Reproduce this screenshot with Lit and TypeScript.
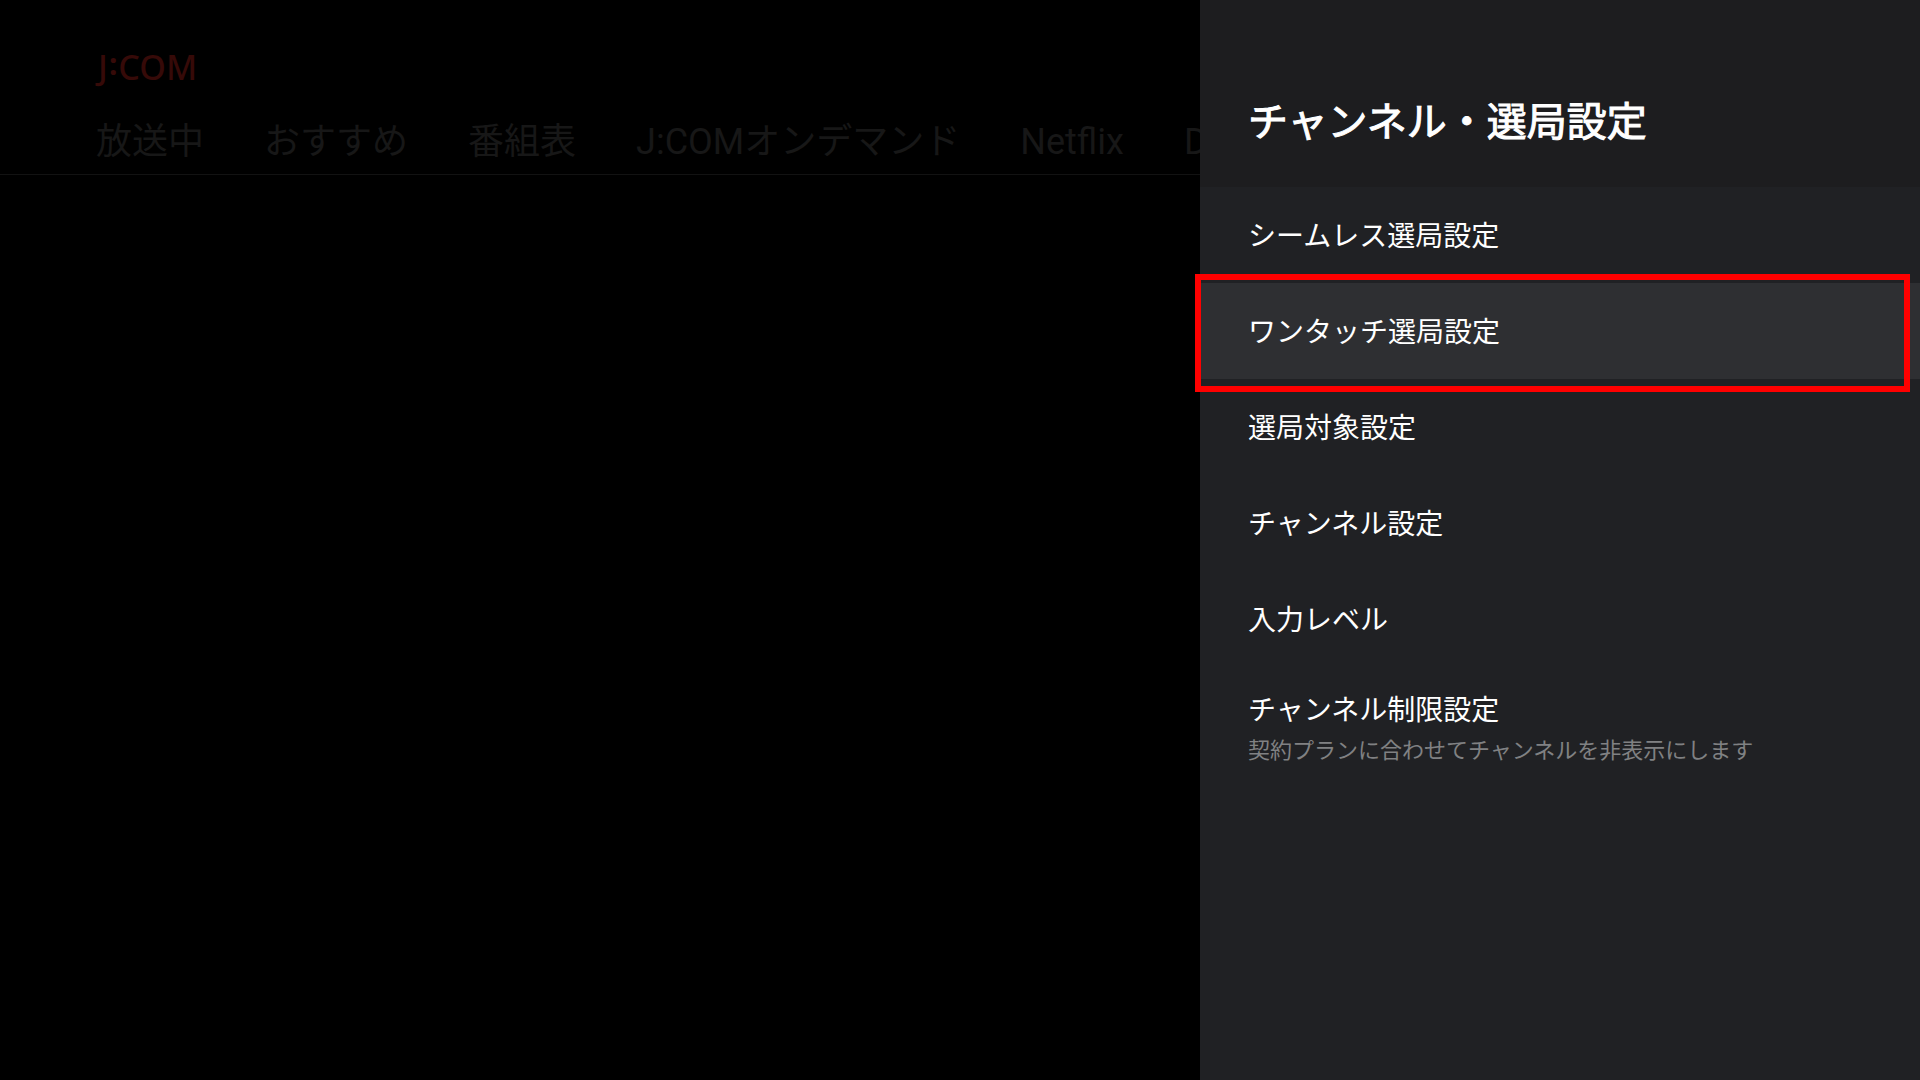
import { LitElement, html, css, nothing } from "lit";
import { customElement, property, state } from "lit/decorators.js";

interface Setting {
  label: string;
  note?: string;
}

const TABS = ["放送中", "おすすめ", "番組表", "J:COMオンデマンド", "Netflix", "D"];

const SETTINGS: Setting[] = [
  { label: "シームレス選局設定" },
  { label: "ワンタッチ選局設定" },
  { label: "選局対象設定" },
  { label: "チャンネル設定" },
  { label: "入力レベル" },
  { label: "チャンネル制限設定", note: "契約プランに合わせてチャンネルを非表示にします" },
];

@customElement("home-screen")
export class HomeScreen extends LitElement {
  static styles = css`
    :host {
      display: block;
      min-width: 0;
      overflow: hidden;
      background: #000;
    }
    .header {
      padding: 43px 0 0 96px;
      border-bottom: 1px solid #121212;
    }
    .logo {
      display: flex;
      padding-left: 2px;
      font: 500 34px/48px "Noto Sans", sans-serif;
      color: #360a08;
      text-decoration: none;
    }
    .colon {
      padding: 0 1px;
      font-weight: 700;
      font-size: 30px;
      line-height: 42px;
    }
    .tabs {
      display: flex;
      gap: 60px;
      padding: 25px 0 6px;
    }
    .tab {
      flex: none;
      font-size: 36px;
      line-height: 52px;
      height: 52px;
      color: #171717;
      text-decoration: none;
      white-space: nowrap;
    }
  `;

  render() {
    return html`
      <header class="header">
        <a class="logo" href="#home"><span>J</span><span class="colon">:</span><span>COM</span></a>
        <nav class="tabs">
          ${TABS.map((name) => html`<a class="tab" href="#">${name}</a>`)}
        </nav>
      </header>
    `;
  }
}

@customElement("setting-row")
export class SettingRow extends LitElement {
  @property({ attribute: false }) item!: Setting;
  @property({ type: Boolean, reflect: true }) selected = false;

  static styles = css`
    :host {
      display: block;
      position: relative;
    }
    .row {
      display: flex;
      flex-direction: column;
      justify-content: center;
      box-sizing: border-box;
      width: 100%;
      min-height: 96px;
      padding: 23px 48px 19px;
      border: 0;
      outline: 0;
      background: transparent;
      color: #fff;
      font: inherit;
      text-align: left;
      cursor: pointer;
    }
    :host([selected]) .row {
      background: #2e2f32;
    }
    .label {
      font-size: 28px;
      line-height: 42px;
    }
    .note {
      font-size: 22px;
      line-height: 38px;
      color: #808183;
    }
    .marker {
      position: absolute;
      inset: -9px 10px -13px -5px;
      border: 6px solid #f00;
      pointer-events: none;
    }
  `;

  render() {
    return html`
      <button class="row" type="button">
        <span class="label">${this.item.label}</span>
        ${this.item.note ? html`<span class="note">${this.item.note}</span>` : nothing}
      </button>
      ${this.selected ? html`<div class="marker"></div>` : nothing}
    `;
  }
}

@customElement("app-root")
export class AppRoot extends LitElement {
  @state() private selected = 1;

  static styles = css`
    :host {
      display: grid;
      grid-template-columns: minmax(0, 5fr) minmax(0, 3fr);
      min-height: 100vh;
      background: #000;
      font-family: Roboto, "Noto Sans CJK JP", sans-serif;
    }
    .panel {
      background: #202124;
    }
    .heading {
      margin: 0;
      padding: 93px 48px 34px;
      background: #1d1d1f;
      color: #fff;
      font-size: 40px;
      line-height: 60px;
      font-weight: 400;
      -webkit-text-stroke: 1px #fff;
    }
    .list {
      margin: 0;
      padding: 0;
      list-style: none;
    }
  `;

  render() {
    return html`
      <home-screen></home-screen>
      <aside class="panel">
        <h1 class="heading">チャンネル・選局設定</h1>
        <ul class="list">
          ${SETTINGS.map(
            (item, i) => html`<li>
              <setting-row
                .item=${item}
                ?selected=${i === this.selected}
                @click=${() => (this.selected = i)}
              ></setting-row>
            </li>`
          )}
        </ul>
      </aside>
    `;
  }
}
